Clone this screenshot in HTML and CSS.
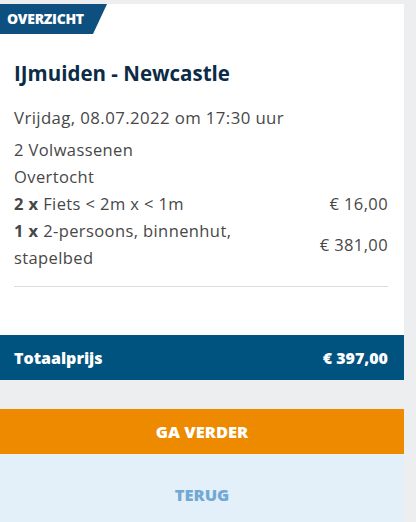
FILE: index.html
```html
<!DOCTYPE html>
<html lang="nl">
<head>
<meta charset="utf-8">
<link rel="stylesheet" href="styles.css">
</head>
<body>
<div class="wrap">
  <div class="card">
    <div class="badge">OVERZICHT</div>
    <div class="body">
      <h1 class="title">IJmuiden - Newcastle</h1>
      <p class="date">Vrijdag, 08.07.2022 om 17:30 uur</p>
      <div class="line">2 Volwassenen</div>
      <div class="line">Overtocht</div>
      <div class="row">
        <div class="desc"><b>2 x</b> Fiets &lt; 2m x &lt; 1m</div>
        <div class="price">€ 16,00</div>
      </div>
      <div class="row">
        <div class="desc"><b>1 x</b> 2-persoons, binnenhut, stapelbed</div>
        <div class="price">€ 381,00</div>
      </div>
      <hr class="divider">
    </div>
  </div>
  <div class="total">
    <span>Totaalprijs</span>
    <span>€ 397,00</span>
  </div>
  <div class="actions">
    <button class="btn primary">GA VERDER</button>
    <button class="btn secondary">TERUG</button>
  </div>
</div>
</body>
</html>
```
FILE: styles.css
```css
html, body {
  margin: 0;
  padding: 0;
  background: #edeef0;
}
body {
  font-family: "Open Sans", "Noto Sans", sans-serif;
  color: #474747;
}
.wrap {
  width: 404px;
  padding-top: 4px;
}
.card {
  background: #fff;
  padding-bottom: 48px;
}
.badge {
  width: 107px;
  height: 30px;
  box-sizing: border-box;
  padding-left: 7px;
  background: #0d4f7e;
  clip-path: polygon(0 0, 107px 0, 93px 30px, 0 30px);
  color: #fff;
  font-weight: 800;
  font-size: 14px;
  line-height: 30px;
  letter-spacing: -0.3px;
}
.body {
  padding: 0 16px 0 14px;
}
.title {
  margin: 26px 0 0;
  font-size: 20.5px;
  line-height: 26px;
  font-weight: 700;
  color: #0c2b46;
}
.date {
  margin: 20px 0 6px;
  font-size: 16.8px;
  line-height: 24px;
  letter-spacing: 0.4px;
}
.line {
  font-size: 16.5px;
  line-height: 27px;
  letter-spacing: 0.4px;
}
.row {
  display: flex;
  justify-content: space-between;
  align-items: center;
  font-size: 16.5px;
  line-height: 27px;
  letter-spacing: 0.4px;
}
.desc {
  width: 250px;
}
.desc b {
  font-weight: 700;
}
.price {
  white-space: nowrap;
}
.divider {
  margin: 15px 0 0;
  border: 0;
  border-top: 1px solid #dcdcdc;
}
.total {
  display: flex;
  justify-content: space-between;
  align-items: center;
  height: 45px;
  padding: 0 16px 0 14px;
  background: #00527f;
  color: #fff;
  font-weight: 800;
  font-size: 16px;
}
.actions {
  display: flex;
  flex-direction: column;
  margin-top: 29px;
}
.btn {
  border: 0;
  height: 45px;
  padding: 0;
  font-family: inherit;
  font-weight: 800;
  font-size: 16.5px;
}
.primary {
  background: #ee8a00;
  color: #fff;
  margin-bottom: 1px;
}
.secondary {
  background: #e4f0f9;
  color: #72a8d4;
  height: 78px;
}
```
